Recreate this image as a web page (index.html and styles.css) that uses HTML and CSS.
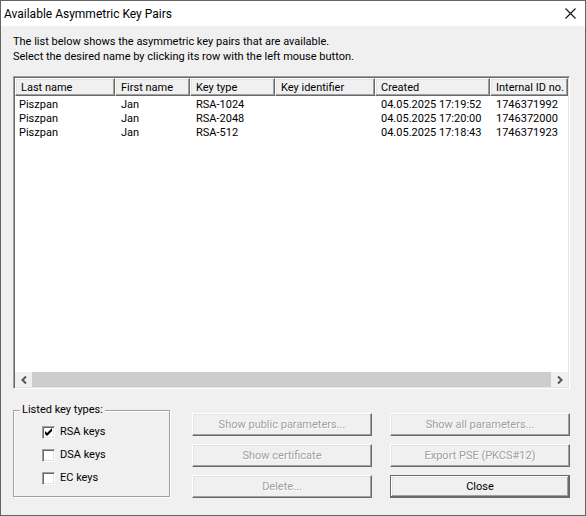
FILE: index.html
```html
<!DOCTYPE html>
<html lang="en">
<head>
<meta charset="utf-8">
<title>Available Asymmetric Key Pairs</title>
<link rel="stylesheet" href="styles.css">
</head>
<body>
<main class="dialog">
  <header class="titlebar">
    <h1 class="title">Available Asymmetric Key Pairs</h1>
    <button class="dismiss" type="button" aria-label="Close window">
      <svg width="11" height="11" viewBox="0 0 11 11"><path d="M.5 .5l10 10M10.5 .5l-10 10" fill="none" stroke="#111" stroke-width="1.1"/></svg>
    </button>
  </header>
  <div class="content">
    <p class="intro">The list below shows the asymmetric key pairs that are available.<br>Select the desired name by clicking its row with the left mouse button.</p>
    <section class="list">
      <table class="keys">
        <colgroup><col class="c-last"><col class="c-first"><col class="c-type"><col class="c-ident"><col class="c-created"><col></colgroup>
        <thead>
          <tr><th>Last name</th><th>First name</th><th>Key type</th><th>Key identifier</th><th>Created</th><th>Internal ID no.</th></tr>
        </thead>
        <tbody>
          <tr><td>Piszpan</td><td>Jan</td><td>RSA-1024</td><td></td><td>04.05.2025 17:19:52</td><td>1746371992</td></tr>
          <tr><td>Piszpan</td><td>Jan</td><td>RSA-2048</td><td></td><td>04.05.2025 17:20:00</td><td>1746372000</td></tr>
          <tr><td>Piszpan</td><td>Jan</td><td>RSA-512</td><td></td><td>04.05.2025 17:18:43</td><td>1746371923</td></tr>
        </tbody>
      </table>
      <div class="scrollbar">
        <button class="arrow" type="button" aria-label="Scroll left"><svg width="6" height="8" viewBox="0 0 6 8"><path d="M5 .5L1.5 4L5 7.5" fill="none" stroke="#555" stroke-width="2"/></svg></button>
        <div class="thumb"></div>
        <button class="arrow" type="button" aria-label="Scroll right"><svg width="6" height="8" viewBox="0 0 6 8"><path d="M1 .5L4.5 4L1 7.5" fill="none" stroke="#555" stroke-width="2"/></svg></button>
      </div>
    </section>
    <div class="bottom">
      <fieldset class="types">
        <legend>Listed key types:</legend>
        <label class="check"><input type="checkbox" checked>RSA keys</label>
        <label class="check"><input type="checkbox">DSA keys</label>
        <label class="check"><input type="checkbox">EC keys</label>
      </fieldset>
      <div class="actions">
        <button class="btn" type="button" disabled>Show public parameters...</button>
        <button class="btn" type="button" disabled>Show all parameters...</button>
        <button class="btn" type="button" disabled>Show certificate</button>
        <button class="btn" type="button" disabled>Export PSE (PKCS#12)</button>
        <button class="btn" type="button" disabled>Delete...</button>
        <button class="btn btn-default" type="button">Close</button>
      </div>
    </div>
  </div>
</main>
</body>
</html>
```
FILE: styles.css
```css
* { box-sizing: border-box; }
body {
  margin: 0;
  background: #f0f0f0;
  color: #000;
  font: 11px/14px Roboto, "Liberation Sans", sans-serif;
}
button, input { font: inherit; margin: 0; }
.dialog {
  display: flex;
  flex-direction: column;
  min-height: 100vh;
  border: 1px solid #646464;
}
.titlebar {
  display: flex;
  align-items: center;
  justify-content: space-between;
  height: 25px;
  padding: 0 9px 0 3px;
  background: #fff;
}
.title {
  margin: 0;
  font: 12px/16px Roboto, "Open Sans", sans-serif;
}
.dismiss {
  display: flex;
  padding: 0;
  border: 0;
  background: none;
}
.content {
  flex: 1;
  display: flex;
  flex-direction: column;
  padding: 8px 15px 17px 12px;
}
.intro {
  margin: 0 0 12px;
  line-height: 15px;
}
.list {
  flex: 1;
  display: flex;
  flex-direction: column;
  justify-content: space-between;
  background: #fff;
  border: 1px solid;
  border-color: #a0a0a0 #fff #fff #a0a0a0;
  box-shadow: inset 1px 1px #696969, inset -1px -1px #e3e3e3;
  padding: 1px;
}
.keys {
  width: 100%;
  table-layout: fixed;
  border-collapse: separate;
  border-spacing: 0;
}
.c-last { width: 100px; }
.c-first { width: 75px; }
.c-type { width: 85px; }
.c-ident { width: 100px; }
.c-created { width: 115px; }
.keys th {
  height: 18px;
  padding: 1px 0 0 5px;
  border: 1px solid;
  border-color: #fff #696969 #696969 #fff;
  box-shadow: inset -1px -1px #a0a0a0, inset 1px 1px #e3e3e3;
  background: #f0f0f0;
  font-weight: normal;
  line-height: 14px;
  text-align: left;
  white-space: nowrap;
}
.keys td {
  height: 14px;
  padding: 0 0 0 6px;
  line-height: 14px;
  white-space: nowrap;
}
.keys td:first-child { padding-left: 4px; }
.keys tbody::before {
  content: "";
  display: table-row;
  height: 2px;
}
.scrollbar {
  display: flex;
  height: 15px;
  background: #f0f0f0;
}
.arrow {
  display: flex;
  align-items: center;
  justify-content: center;
  width: 17px;
  padding: 0;
  border: 0;
  background: #f0f0f0;
}
.thumb {
  flex: 1;
  background: #cdcdcd;
}
.bottom {
  display: flex;
  gap: 22px;
  margin-top: 14px;
}
.types {
  flex: 0 0 157px;
  min-width: 0;
  height: 94px;
  margin: 0;
  padding: 8px 0 0 28px;
  border: 1px solid #a0a0a0;
  box-shadow: 1px 1px #fff, inset 1px 1px #fff;
  display: flex;
  flex-direction: column;
  gap: 9px;
}
.types legend {
  margin-left: -22px;
  padding: 0 2px;
  background: #f0f0f0;
}
.check {
  display: flex;
  align-items: center;
  gap: 5px;
}
.check input {
  appearance: none;
  width: 13px;
  height: 13px;
  border: 1px solid;
  border-color: #a0a0a0 #fff #fff #a0a0a0;
  box-shadow: inset 1px 1px #696969, inset -1px -1px #e3e3e3;
  background: #fff;
}
.check input:checked {
  background: #fff url("data:image/svg+xml,%3Csvg xmlns='http://www.w3.org/2000/svg' viewBox='0 0 11 11'%3E%3Cpath d='M2 4v3l2 2 5-5V1L4 6z'/%3E%3C/svg%3E");
}
.actions {
  flex: 1;
  display: grid;
  grid-template-columns: 1fr 1fr;
  column-gap: 18px;
  row-gap: 8px;
  align-content: start;
  padding-top: 10px;
}
.btn {
  height: 23px;
  padding: 0;
  border: 1px solid;
  border-color: #fff #696969 #696969 #fff;
  box-shadow: inset -1px -1px #a0a0a0, inset 1px 1px #e3e3e3;
  background: #f0f0f0;
  color: #000;
}
.btn:disabled {
  color: #a0a0a0;
  text-shadow: 1px 1px #fff;
}
.btn-default {
  border-color: #696969;
  box-shadow: inset -1px -1px #696969, inset 1px 1px #fff, inset -2px -2px #a0a0a0, inset 2px 2px #e3e3e3;
}
```
